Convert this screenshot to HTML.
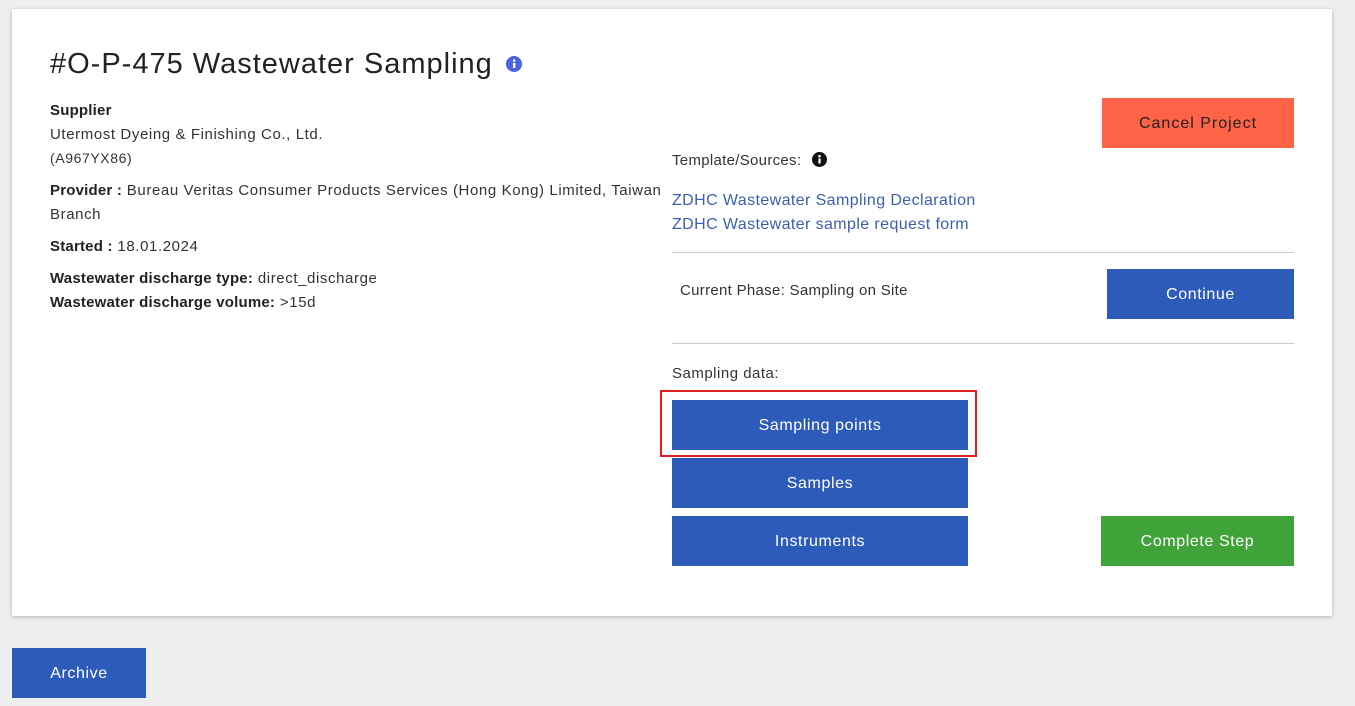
<!DOCTYPE html>
<html><head><style>
body{margin:0;background:#eeeeee;font-family:"Liberation Sans",sans-serif;width:1355px;height:706px;overflow:hidden;position:relative;color:#2a2a2a}
.card{position:absolute;left:12px;top:9px;width:1320px;height:607px;background:#fff;box-shadow:0 1px 4px rgba(0,0,0,.25)}
.a{position:absolute;white-space:nowrap}
h1{position:absolute;left:50px;top:48px;margin:0;font-weight:400;font-size:29px;color:#222;letter-spacing:1px}
.t{font-size:15px;color:#333;letter-spacing:0.6px}
b{font-weight:700;color:#222;letter-spacing:0.2px}
.btn{position:absolute;color:#fff;font-size:16px;display:flex;align-items:center;justify-content:center;letter-spacing:0.6px;padding-top:2px;box-sizing:border-box}
.blue{background:#2d5bb9}
.link{color:#3c5fb0;font-size:16px;letter-spacing:0.4px}
.hr{position:absolute;left:672px;width:622px;height:1px;background:#ccc}
</style></head><body>
<div class="card"></div>
<h1>#O-P-475 Wastewater Sampling</h1>
<svg class="a" style="left:506px;top:56px" width="16" height="16"><circle cx="8" cy="8" r="8" fill="#4a63e0"/><rect x="7" y="7" width="2.4" height="5" fill="#fff"/><circle cx="8.2" cy="4.6" r="1.3" fill="#fff"/></svg>
<div class="a t" style="left:50px;top:102px"><b>Supplier</b></div>
<div class="a t" style="left:50px;top:126px">Utermost Dyeing &amp; Finishing Co., Ltd.</div>
<div class="a t" style="left:50px;top:150px;font-size:14px">(A967YX86)</div>
<div class="a t" style="left:50px;top:182px"><b>Provider :</b> Bureau Veritas Consumer Products Services (Hong Kong) Limited, Taiwan</div>
<div class="a t" style="left:50px;top:206px">Branch</div>
<div class="a t" style="left:50px;top:238px"><b>Started :</b> 18.01.2024</div>
<div class="a t" style="left:50px;top:270px"><b>Wastewater discharge type:</b> direct_discharge</div>
<div class="a t" style="left:50px;top:294px"><b>Wastewater discharge volume:</b> &gt;15d</div>
<div class="btn" style="left:1102px;top:98px;width:192px;height:50px;background:#ff6347;color:#222;letter-spacing:1px">Cancel Project</div>
<div class="a t" style="left:672px;top:152px;letter-spacing:0.3px">Template/Sources:</div>
<svg class="a" style="left:812px;top:152px" width="15" height="15"><circle cx="7.5" cy="7.5" r="7.5" fill="#111"/><rect x="6.4" y="6.5" width="2.3" height="5" fill="#fff"/><circle cx="7.5" cy="4.2" r="1.3" fill="#fff"/></svg>
<div class="a link" style="left:672px;top:192px">ZDHC Wastewater Sampling Declaration</div>
<div class="a link" style="left:672px;top:216px">ZDHC Wastewater sample request form</div>
<div class="hr" style="top:252px"></div>
<div class="a t" style="left:680px;top:282px;letter-spacing:0.3px">Current Phase: Sampling on Site</div>
<div class="btn blue" style="left:1107px;top:269px;width:187px;height:50px">Continue</div>
<div class="hr" style="top:343px"></div>
<div class="a t" style="left:672px;top:365px;letter-spacing:0.5px">Sampling data:</div>
<div class="a" style="left:660px;top:390px;border:2px solid #e02020;box-sizing:border-box;width:317px;height:67px"></div>
<div class="btn blue" style="left:672px;top:400px;width:296px;height:50px">Sampling points</div>
<div class="btn blue" style="left:672px;top:458px;width:296px;height:50px">Samples</div>
<div class="btn blue" style="left:672px;top:516px;width:296px;height:50px">Instruments</div>
<div class="btn" style="left:1101px;top:516px;width:193px;height:50px;background:#3fa33a">Complete Step</div>
<div class="btn blue" style="left:12px;top:648px;width:134px;height:50px">Archive</div>
</body></html>
